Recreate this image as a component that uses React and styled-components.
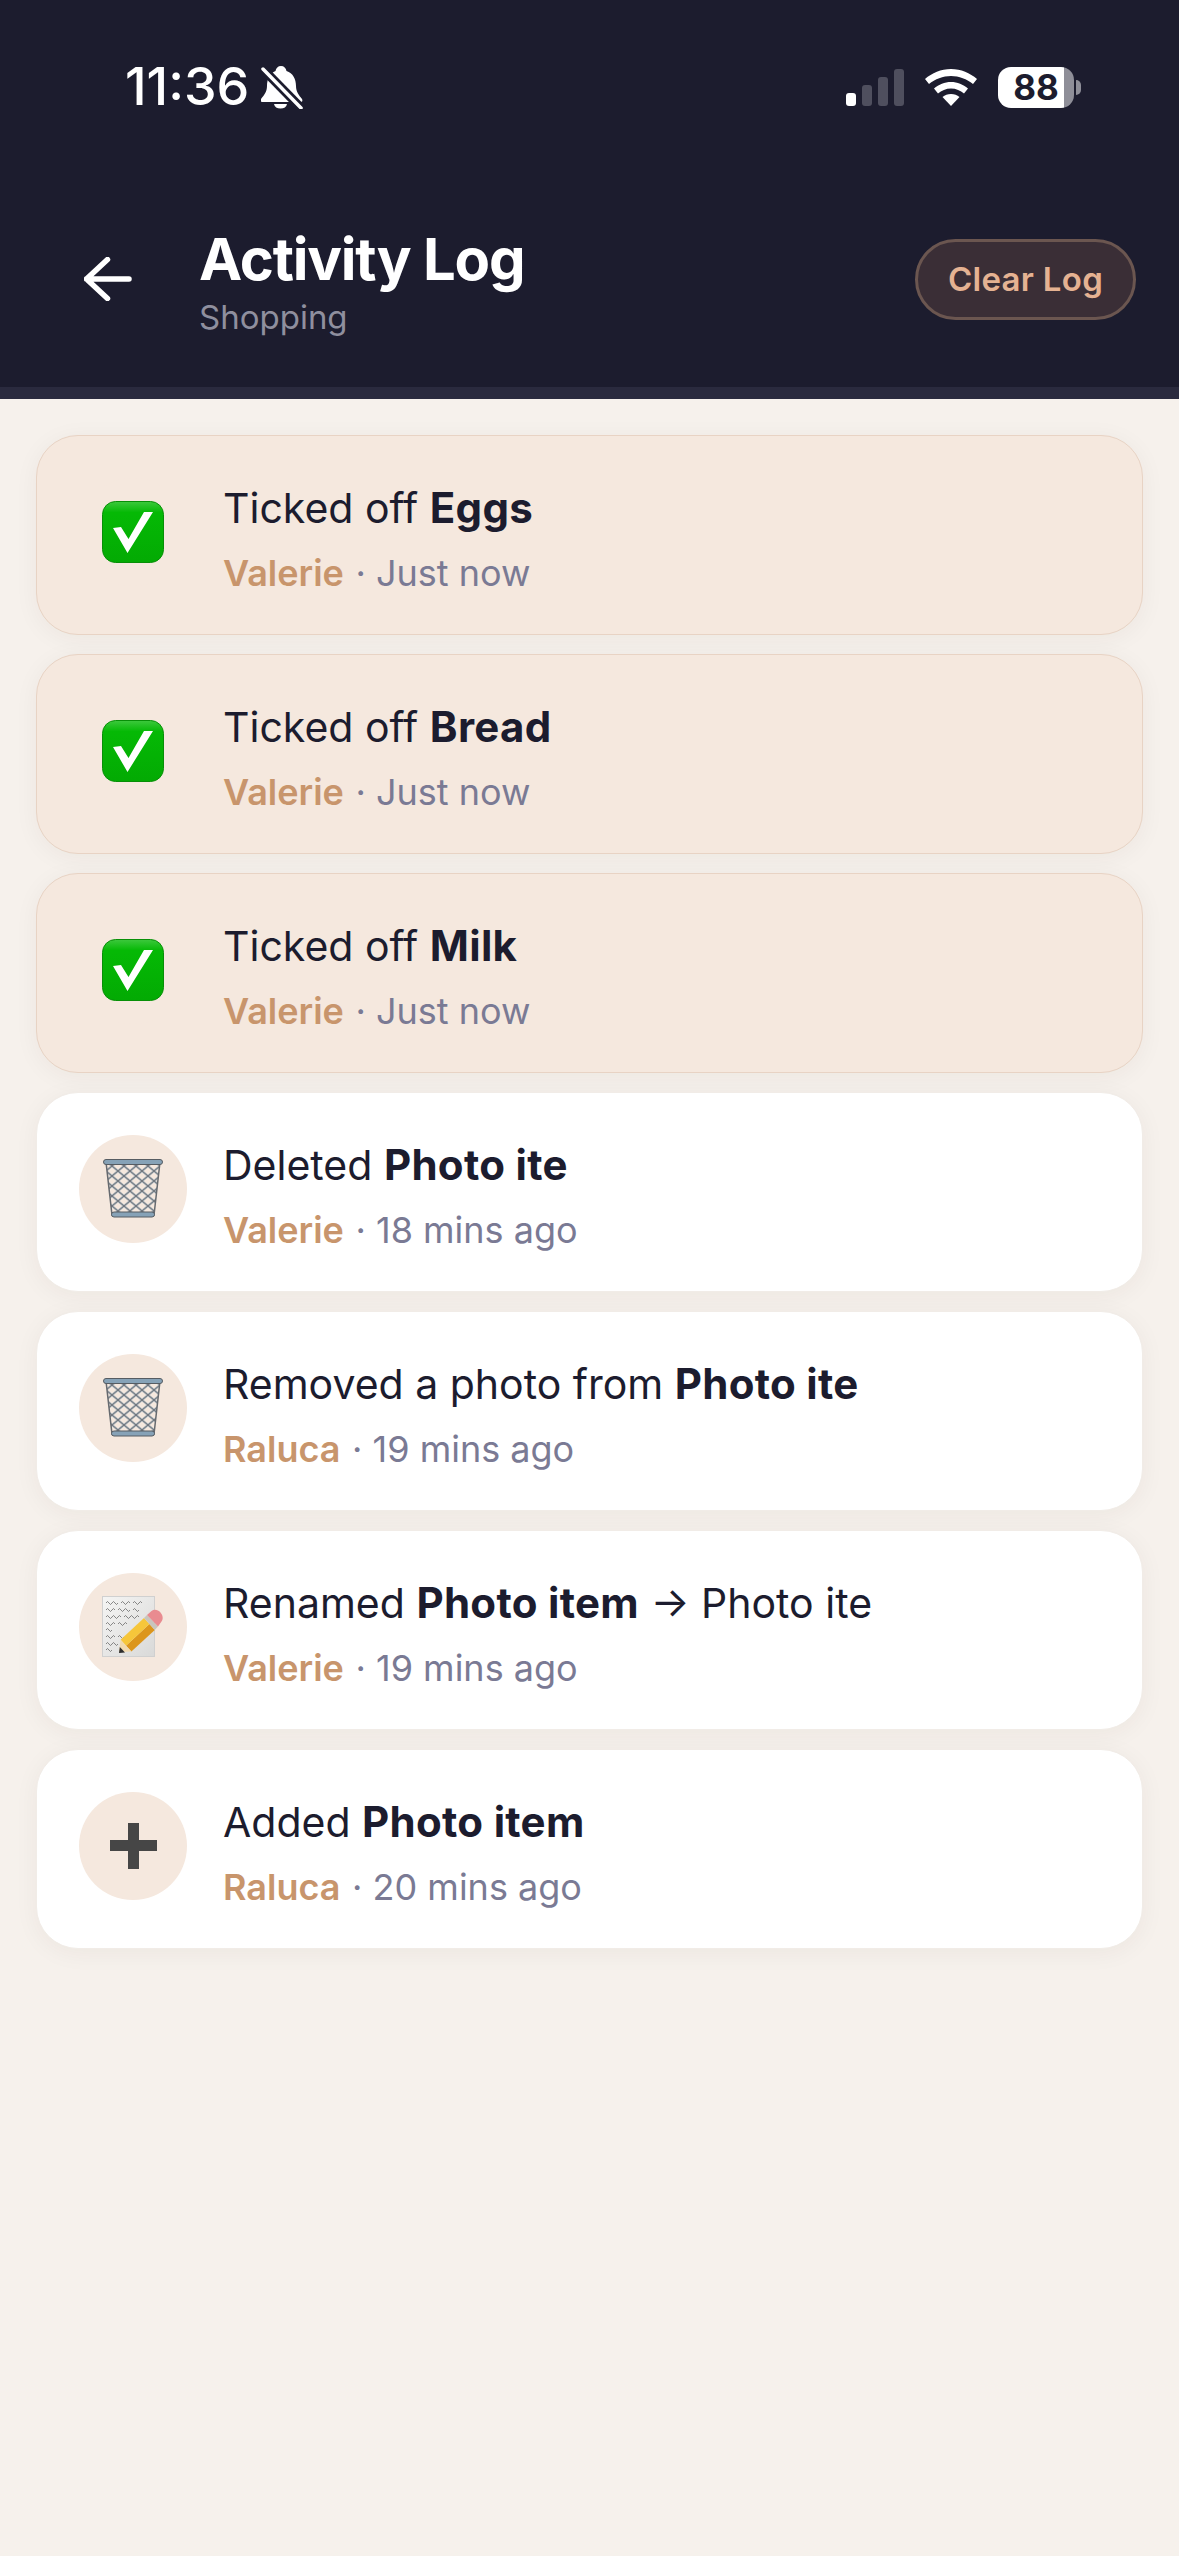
import React from "react";
import styled, { createGlobalStyle } from "styled-components";

const GlobalStyle = createGlobalStyle`
  * {
    box-sizing: border-box;
  }

  body {
    margin: 0;
    background: #f6f1ec;
    font-family: Inter, "Noto Sans", sans-serif;
  }
`;

const Page = styled.div`
  width: 1179px;
  min-height: 2556px;
  background: #f6f1ec;
`;

const Header = styled.header`
  height: 399px;
  background: #1c1c2e;
  border-bottom: 12px solid #2a2a3e;
`;

const StatusBar = styled.div`
  height: 216px;
  padding: 60px 105px 0 125px;
  display: flex;
  justify-content: space-between;
  align-items: flex-start;
`;

const StatusLeft = styled.div`
  display: flex;
  align-items: center;
  gap: 12px;
`;

const Time = styled.span`
  color: #fff;
  font-size: 52px;
  line-height: 54px;
  font-weight: 500;
`;

const StatusRight = styled.div`
  display: flex;
  align-items: center;
  gap: 21px;
  padding-top: 7px;
`;

const Battery = styled.div`
  position: relative;
  width: 76px;
  height: 41px;
  border-radius: 13px;
  background: linear-gradient(to right, #fff 87%, #8e8e98 87%);
  color: #1c1c2e;
  font-size: 35px;
  line-height: 41px;
  font-weight: 700;
  text-align: center;

  &::after {
    content: "";
    position: absolute;
    right: -7px;
    top: 13px;
    width: 5px;
    height: 15px;
    border-radius: 0 8px 8px 0;
    background: #8e8e98;
  }
`;

const TitleBar = styled.div`
  display: flex;
  align-items: center;
  padding: 0 43px 0 84px;
  margin-top: 5px;
`;

const BackButton = styled.button`
  display: flex;
  width: 115px;
  padding: 0;
  border: 0;
  background: none;
`;

const TitleBlock = styled.div`
  flex: 1;
  display: flex;
  flex-direction: column;
  padding-top: 5px;
`;

const Title = styled.h1`
  margin: 0;
  color: #fff;
  font-size: 58px;
  line-height: 66px;
  font-weight: 700;
  letter-spacing: -1.2px;
`;

const Subtitle = styled.div`
  margin-top: 5px;
  color: #8f8f9e;
  font-size: 33px;
  line-height: 40px;
`;

const ClearButton = styled.button`
  width: 221px;
  height: 81px;
  border: 3px solid #6b5650;
  border-radius: 41px;
  background: #3a2e36;
  color: #e5b292;
  font-family: inherit;
  font-size: 33px;
  font-weight: 600;
  letter-spacing: 0.3px;
`;

const List = styled.main`
  padding: 36px 36px 0;
  display: flex;
  flex-direction: column;
  gap: 19px;
`;

const Card = styled.div`
  height: 200px;
  padding: 0 42px;
  display: flex;
  align-items: center;
  gap: 36px;
  border-radius: 42px;
  background: ${props => (props.$fresh ? "#f5e8de" : "#fff")};
  border: 1px solid ${props => (props.$fresh ? "#e8d3c4" : "#f1ece7")};
  box-shadow: 0 4px 24px rgba(60, 40, 20, 0.05);
`;

const IconCircle = styled.div`
  flex: none;
  width: 108px;
  height: 108px;
  margin-bottom: 7px;
  border-radius: 50%;
  background: #f5e8de;
  display: flex;
  align-items: center;
  justify-content: center;
`;

const CardBody = styled.div`
  display: flex;
  flex-direction: column;
  gap: 18px;
  padding-top: 8px;
`;

const Message = styled.div`
  color: #1c1c2e;
  font-size: 41px;
  line-height: 50px;

  b {
    font-size: 42px;
    font-weight: 700;
    letter-spacing: 0.3px;
  }
`;

const Meta = styled.div`
  color: #7a7a94;
  font-size: 36px;
  line-height: 44px;

  b {
    margin-right: 1.5px;
    color: #c8956c;
    font-weight: 600;
  }
`;

const BellOff = () => (
  <svg width="42" height="43" viewBox="0 0 42 43">
    <path
      fill="#fff"
      d="M20 0c3 0 5 2 5.500 5C32 7 35 13 35 20c0 6 3 9 6 13 1 2 0 3-2 3H2c-2 0-3-1-2-3 3-4 6-7 6-13C6 13 9 7 14.500 5 15 2 17 0 20 0z"
    />
    <path fill="#fff" d="M13 38h13c-.5 3-3 4.500-6.500 4.500S13.500 41 13 38z" />
    <path stroke="#1c1c2e" strokeWidth="9" d="M0 1l41 42" />
    <path stroke="#fff" strokeWidth="3.500" strokeLinecap="round" d="M2 3l38 39" />
  </svg>
);

const Signal = () => (
  <svg width="58" height="37" viewBox="0 0 58 37">
    <rect x="0" y="24" width="10" height="13" rx="3" fill="#fff" />
    <rect x="16" y="16" width="10" height="21" rx="3" fill="#4f4f5e" />
    <rect x="32" y="8" width="10" height="29" rx="3" fill="#4f4f5e" />
    <rect x="48" y="0" width="10" height="37" rx="3" fill="#4f4f5e" />
  </svg>
);

const Wifi = () => (
  <svg width="52" height="37" viewBox="0 0 52 37">
    <path
      fill="#fff"
      d="M26 0c10 0 19 4 26 10l-4 5C42 10 34 7 26 7S10 10 4 15l-4-5C7 4 16 0 26 0z"
    />
    <path
      fill="#fff"
      d="M26 13c6.500 0 12 2.500 17 6.500l-4 5c-3.500-3-8-5-13-5s-9.500 2-13 5l-4-5c5-4 10.500-6.500 17-6.500z"
    />
    <path fill="#fff" d="M26 25c3.500 0 6 1 8.500 3L26 37l-8.500-9c2.500-2 5-3 8.500-3z" />
  </svg>
);

const BackArrow = () => (
  <svg width="48" height="44" viewBox="0 0 48 44">
    <path
      d="M23.500 2.500L2.500 22l21 19.500M2.500 22h42.500"
      fill="none"
      stroke="#fff"
      strokeWidth="5.500"
      strokeLinecap="round"
      strokeLinejoin="round"
    />
  </svg>
);

const CheckEmoji = () => (
  <svg width="62" height="62" viewBox="0 0 62 62">
    <defs>
      <linearGradient id="checkGreen" x1="0" y1="0" x2="0" y2="1">
        <stop offset="0" stopColor="#3dc83d" />
        <stop offset="0.18" stopColor="#05b905" />
        <stop offset="1" stopColor="#03aa03" />
      </linearGradient>
    </defs>
    <rect x="0.500" y="0.500" width="61" height="61" rx="13" fill="url(#checkGreen)" stroke="#078f07" />
    <path d="M11 27l8-1 7.500 12L42 11h9L25.500 52z" fill="#fff" />
  </svg>
);

const TrashEmoji = () => (
  <svg width="60" height="59" viewBox="0 0 60 59">
    <defs>
      <pattern id="mesh" width="12" height="10" patternUnits="userSpaceOnUse" patternTransform="translate(3 2)">
        <path d="M0 0l12 10M12 0L0 10" stroke="#a7b1b9" strokeWidth="2.200" fill="none" />
        <path d="M0 0l12 10M12 0L0 10" stroke="#676b70" strokeWidth="0.900" fill="none" />
      </pattern>
    </defs>
    <path d="M3 3h54l-6 53H9z" fill="url(#mesh)" stroke="#666a6f" strokeWidth="1.500" />
    <rect x="0.500" y="0.500" width="59" height="5" rx="2.500" fill="#86a2b7" stroke="#565c62" />
    <rect x="8.500" y="53" width="43" height="5" rx="2.500" fill="#86a2b7" stroke="#565c62" />
  </svg>
);

const scribbles = [
  { y: 7, waves: "q1.500-3 3 0t3 0 3 0 3 0m3 0q1.500-3 3 0t3 0 3 0m3 0q1.500-3 3 0t3 0 3 0" },
  { y: 14, waves: "q1.500-3 3 0t3 0 3 0m3 0q1.500-3 3 0t3 0 3 0 3 0m3 0q1.500-3 3 0t3 0" },
  { y: 21, waves: "q1.500-3 3 0t3 0 3 0 3 0 3 0m3 0q1.500-3 3 0t3 0 3 0 3 0 3 0" },
  { y: 28, waves: "q1.500-3 3 0t3 0 3 0m3 0q1.500-3 3 0t3 0 3 0" },
  { y: 34, waves: "q1.500-3 3 0t3 0" },
  { y: 41, waves: "q1.500-3 3 0t3 0 3 0m3 0q1.500-3 3 0t3 0" },
  { y: 48, waves: "q1.500-3 3 0t3 0 3 0 3 0" },
  { y: 54, waves: "q1.500-3 3 0t3 0" },
];

const NoteEmoji = () => (
  <svg width="62" height="62" viewBox="0 0 62 62">
    <defs>
      <linearGradient id="paper" x1="0" y1="0" x2="1" y2="1">
        <stop offset="0" stopColor="#f5f5f4" />
        <stop offset="1" stopColor="#d9d9d8" />
      </linearGradient>
    </defs>
    <rect x="0.500" y="0.500" width="52" height="60" fill="url(#paper)" stroke="#d0d0d0" />
    {scribbles.map(line => (
      <path
        key={line.y}
        d={`M4 ${line.y}${line.waves}`}
        fill="none"
        stroke="#5a5a5a"
        strokeWidth="0.700"
      />
    ))}
    <path d="M24 49.700L47.400 28 52.800 33.900 29.400 55.600z" fill="#dc961c" />
    <path d="M18.600 43.800L42 22 47.400 28 24 49.700z" fill="#f6c63a" />
    <path d="M42 22l3-3 11 11.500-3.200 3.400z" fill="#c9c5bd" />
    <path d="M45 19l4.500-4c2.500-2 6.500-1.500 9 1.500s3 6.500 1 9L56 30.500z" fill="#e98b90" />
    <path d="M17 56l1.600-12.200L29.400 55.600z" fill="#f1d9ae" />
    <path d="M17 57l.8-6 5.200 5.500z" fill="#2e2e2e" />
  </svg>
);

const PlusIcon = () => (
  <svg width="47" height="46" viewBox="0 0 47 46">
    <path d="M18 0h11v17h18v11H29v18H18V28H0V17h18z" fill="#464646" />
  </svg>
);

const entries = [
  { id: 1, fresh: true, icon: <CheckEmoji />, pre: "Ticked off ", bold: "Eggs", who: "Valerie", when: "Just now" },
  { id: 2, fresh: true, icon: <CheckEmoji />, pre: "Ticked off ", bold: "Bread", who: "Valerie", when: "Just now" },
  { id: 3, fresh: true, icon: <CheckEmoji />, pre: "Ticked off ", bold: "Milk", who: "Valerie", when: "Just now" },
  { id: 4, icon: <TrashEmoji />, pre: "Deleted ", bold: "Photo ite", who: "Valerie", when: "18 mins ago" },
  { id: 5, icon: <TrashEmoji />, pre: "Removed a photo from ", bold: "Photo ite", who: "Raluca", when: "19 mins ago" },
  { id: 6, icon: <NoteEmoji />, pre: "Renamed ", bold: "Photo item", post: " → Photo ite", who: "Valerie", when: "19 mins ago" },
  { id: 7, icon: <PlusIcon />, pre: "Added ", bold: "Photo item", who: "Raluca", when: "20 mins ago" },
];

const App = () => {
  return (
    <Page>
      <GlobalStyle />
      <Header>
        <StatusBar>
          <StatusLeft>
            <Time>11:36</Time>
            <BellOff />
          </StatusLeft>
          <StatusRight>
            <Signal />
            <Wifi />
            <Battery>88</Battery>
          </StatusRight>
        </StatusBar>
        <TitleBar>
          <BackButton>
            <BackArrow />
          </BackButton>
          <TitleBlock>
            <Title>Activity Log</Title>
            <Subtitle>Shopping</Subtitle>
          </TitleBlock>
          <ClearButton>Clear Log</ClearButton>
        </TitleBar>
      </Header>
      <List>
        {entries.map(entry => (
          <Card key={entry.id} $fresh={entry.fresh}>
            <IconCircle>{entry.icon}</IconCircle>
            <CardBody>
              <Message>
                {entry.pre}
                <b>{entry.bold}</b>
                {entry.post}
              </Message>
              <Meta>
                <b>{entry.who}</b> · {entry.when}
              </Meta>
            </CardBody>
          </Card>
        ))}
      </List>
    </Page>
  );
};

export default App;
